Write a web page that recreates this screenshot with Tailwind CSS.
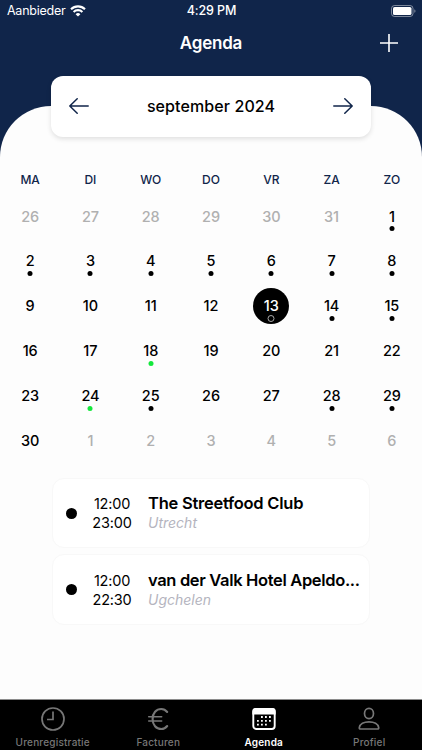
<!DOCTYPE html>
<html lang="nl">
<head>
    <meta charset="UTF-8">
    <meta name="viewport" content="width=device-width, initial-scale=1.0">
    <title>Agenda</title>
    <script src="https://cdn.jsdelivr.net/npm/@tailwindcss/browser@4"></script>
</head>
<body class="bg-[#10254a] font-['Inter',sans-serif] text-black">

    <div class="flex flex-col w-[422px] h-[750px] overflow-hidden">
        <!-- Status bar -->
        <div class="grid grid-cols-3 items-center h-[22px] shrink-0 pl-[7px] pr-[6px] text-white text-[12.5px]">
            <div class="flex items-center gap-[5px]">
                <span class="tracking-[-0.25px]">Aanbieder</span>
                <svg class="w-4 h-3" viewBox="0 0 16 12" fill="none" stroke="white" stroke-width="2.1">
                    <path d="M1 4.2a10 10 0 0 1 14 0"/>
                    <path d="M3.6 6.9a6.3 6.3 0 0 1 8.8 0"/>
                    <path d="M8 11.6 5.6 9.2a3.4 3.4 0 0 1 4.8 0z" fill="white" stroke="none"/>
                </svg>
            </div>
            <span class="text-center font-medium tracking-[-0.1px]">4:29 PM</span>
            <svg class="justify-self-end w-[25px] h-3" viewBox="0 0 25 12">
                <rect x="0.5" y="0.5" width="21.5" height="11" rx="3" fill="none" stroke="white" stroke-opacity="0.45"/>
                <rect x="2" y="2" width="18.5" height="8" rx="1.6" fill="white"/>
                <path d="M23.4 4.2v3.6c1.4-.5 1.4-3.1 0-3.6z" fill="white" fill-opacity="0.5"/>
            </svg>
        </div>

        <!-- Title bar -->
        <header class="grid grid-cols-3 items-center h-[84px] shrink-0 pb-[42px] pr-6 pl-6 text-white">
            <h1 class="col-start-2 pt-[2px] text-center text-[17px] font-semibold tracking-[-0.2px]">Agenda</h1>
            <svg class="justify-self-end w-[18px] h-[18px]" viewBox="0 0 18 18" stroke="white" stroke-width="1.6">
                <path d="M9 0v18M0 9h18"/>
            </svg>
        </header>

        <!-- Sheet with calendar and events -->
        <main class="flex-1 bg-[#fdfdfd] rounded-t-[51px]">
            <div class="relative -mt-[30px] mx-auto w-[320px] h-[61px] px-[18px] pb-[2px] flex items-center justify-between bg-white rounded-xl shadow-[0_2px_5px_rgba(0,0,0,0.12)]">
                <svg class="w-5 h-4" viewBox="0 0 20 16" fill="none" stroke="#10254a" stroke-width="1.5" stroke-linecap="round" stroke-linejoin="round">
                    <path d="M8.2 0.8 0.8 8l7.4 7.2M0.8 8h18.4"/>
                </svg>
                <h2 class="text-[16px] font-medium tracking-[0.1px]">september 2024</h2>
                <svg class="w-5 h-4" viewBox="0 0 20 16" fill="none" stroke="#10254a" stroke-width="1.5" stroke-linecap="round" stroke-linejoin="round">
                    <path d="M11.8 0.8 19.2 8l-7.4 7.2M19.2 8H0.8"/>
                </svg>
            </div>

            <div class="grid grid-cols-7 mt-[29px] h-[28px] items-center text-center text-[12px] font-medium text-[#10254a]">
                <span>MA</span><span>DI</span><span>WO</span><span>DO</span><span>VR</span><span>ZA</span><span>ZO</span>
            </div>
            <div id="days" class="grid grid-cols-7 text-[14.5px] font-medium tracking-[-0.1px]"></div>

            <div class="flex flex-col gap-[6px] mt-[15.2px] mx-auto w-[318px]">
                <div class="flex items-center h-[70.5px] bg-white rounded-xl border border-[#f8f8f8] pl-[13px] pr-1">
                    <span class="w-[11px] h-[11px] shrink-0 rounded-full bg-black"></span>
                    <div class="w-[70px] shrink-0 text-center text-[14.5px] leading-[19px] tracking-[-0.2px]">
                        <p>12:00</p>
                        <p>23:00</p>
                    </div>
                    <div class="min-w-0 flex-1 ml-px leading-[19px]">
                        <p class="truncate text-[16.5px] font-semibold tracking-[-0.25px]">The Streetfood Club</p>
                        <p class="text-[14px] italic text-[#b4b4be]">Utrecht</p>
                    </div>
                </div>
                <div class="flex items-center h-[70.5px] bg-white rounded-xl border border-[#f8f8f8] pl-[13px] pr-1">
                    <span class="w-[11px] h-[11px] shrink-0 rounded-full bg-black"></span>
                    <div class="w-[70px] shrink-0 text-center text-[14.5px] leading-[19px] tracking-[-0.2px]">
                        <p>12:00</p>
                        <p>22:30</p>
                    </div>
                    <div class="min-w-0 flex-1 ml-px leading-[19px]">
                        <p class="whitespace-nowrap text-[16.5px] font-semibold tracking-[-0.34px]">van der Valk Hotel Apeldo...</p>
                        <p class="text-[14px] italic text-[#b4b4be]">Ugchelen</p>
                    </div>
                </div>
            </div>
        </main>

        <!-- Tab bar -->
        <nav class="grid grid-cols-4 h-[51px] shrink-0 bg-black border-t border-[#8c8c8c] text-[10px] font-medium text-[#777777] tracking-[0.2px]">
            <div class="flex flex-col items-center pt-[7px]">
                <svg class="w-6 h-6" viewBox="0 0 24 24" fill="none" stroke="currentColor" stroke-width="1.7">
                    <circle cx="12" cy="12" r="11"/>
                    <path d="M12 4.5v8H6"/>
                </svg>
                <span class="mt-[4px]">Urenregistratie</span>
            </div>
            <div class="flex flex-col items-center pt-[7px]">
                <svg class="w-6 h-6" viewBox="0 0 24 24" fill="none" stroke="currentColor" stroke-width="2.1" stroke-linecap="round">
                    <path d="M21.2 5C19.6 3 17.7 2 15.3 2 10.2 2 6.6 6.1 6.6 12s3.6 10 8.7 10c2.4 0 4.3-1 5.9-3"/>
                    <path d="M2.7 9.8h13M2.7 13.9h13" stroke-width="1.5"/>
                </svg>
                <span class="mt-[4px]">Facturen</span>
            </div>
            <div class="flex flex-col items-center pt-[7px] text-white">
                <svg class="w-6 h-6" viewBox="0 0 24 24" fill="white">
                    <rect x="1.3" y="2" width="21.4" height="20" rx="3" fill="none" stroke="white" stroke-width="1.9"/>
                    <path d="M0.35 7.4V4.4A3.2 3.2 0 0 1 3.55 1.1h16.9a3.2 3.2 0 0 1 3.2 3.3v3z"/>
                    <path d="M9 9.1h1.8v1.8H9zM13 9.1h1.8v1.8H13zM17 9.1h1.8v1.8H17z"/>
                    <path d="M5 12.9h1.8v1.8H5zM9 12.9h1.8v1.8H9zM13 12.9h1.8v1.8H13zM17 12.9h1.8v1.8H17z"/>
                    <path d="M5 16.7h1.8v1.8H5zM9 16.7h1.8v1.8H9zM13 16.7h1.8v1.8H13z"/>
                </svg>
                <span class="mt-[4px] font-semibold">Agenda</span>
            </div>
            <div class="flex flex-col items-center pt-[7px]">
                <svg class="w-6 h-6" viewBox="0 0 24 24" fill="none" stroke="currentColor" stroke-width="1.7">
                    <ellipse cx="12" cy="6.5" rx="4.5" ry="5.1"/>
                    <path d="M3.5 22c-.9 0-1.3-.6-1.2-1.4C2.9 17 7 14.8 12 14.8s9.1 2.2 9.7 5.8c.1.8-.3 1.4-1.2 1.4z"/>
                </svg>
                <span class="mt-[4px]">Profiel</span>
            </div>
        </nav>
    </div>

    <script>
        const SELECTED = 13;
        const booked = [1, 2, 3, 4, 5, 6, 7, 8, 14, 15, 25, 28, 29];
        const available = [18, 24];

        // The grid starts on Monday 26 August and shows six weeks
        const start = new Date(2024, 7, 26);
        const grid = document.getElementById('days');

        for (let i = 0; i < 42; i++) {
            const date = new Date(start.getFullYear(), start.getMonth(), start.getDate() + i);
            const day = date.getDate();
            const inMonth = date.getMonth() === 8;

            let color = inMonth ? 'text-black' : 'text-[#b0b0b0]';
            let circle = '';
            let dot = '';
            if (inMonth && day === SELECTED) {
                color = 'text-white';
                circle = 'bg-black';
                dot = 'w-[7px] h-[7px] bottom-[2px] border border-[#a8a8a8]';
            } else if (inMonth && booked.includes(day)) {
                dot = 'w-[5px] h-[5px] bottom-[3px] bg-black';
            } else if (inMonth && available.includes(day)) {
                dot = 'w-[5px] h-[5px] bottom-[3px] bg-[#14e83c]';
            }

            grid.innerHTML += `
                <div class="flex items-center justify-center h-[44.8px]">
                    <div class="relative flex items-center justify-center w-9 h-9 rounded-full ${circle} ${color}">
                        ${day}
                        ${dot ? `<span class="absolute left-1/2 -translate-x-1/2 rounded-full ${dot}"></span>` : ''}
                    </div>
                </div>`;
        }
    </script>

</body>
</html>
